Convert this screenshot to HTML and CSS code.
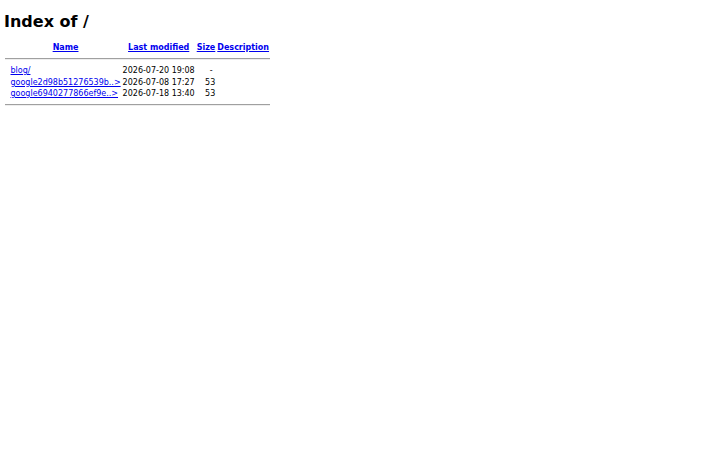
FILE: index.html
```
<!DOCTYPE html>
<html lang="en">
<head>
    <meta charset="UTF-8">
    <title>Index of /</title>
    <link rel="stylesheet" href="styles.css">
</head>
<body>
    <h1 class="title">Index of /</h1>
    <table class="listing">
        <tr>
            <th class="icon"></th>
            <th><a href="?C=N;O=D">Name</a></th>
            <th><a href="?C=M;O=A">Last modified</a></th>
            <th><a href="?C=S;O=A">Size</a></th>
            <th><a href="?C=D;O=A">Description</a></th>
        </tr>
        <tr><th colspan="5" class="rule"><hr></th></tr>
        <tr>
            <td class="icon"></td>
            <td><a href="blog/">blog/</a></td>
            <td class="num">2026-07-20 19:08</td>
            <td class="num">-&nbsp;</td>
            <td>&nbsp;</td>
        </tr>
        <tr>
            <td class="icon"></td>
            <td><a href="google2d98b51276539b.html">google2d98b51276539b..&gt;</a></td>
            <td class="num">2026-07-08 17:27</td>
            <td class="num">53</td>
            <td>&nbsp;</td>
        </tr>
        <tr>
            <td class="icon"></td>
            <td><a href="google6940277866ef9e.html">google6940277866ef9e..&gt;</a></td>
            <td class="num">2026-07-18 13:40</td>
            <td class="num">53</td>
            <td>&nbsp;</td>
        </tr>
        <tr><th colspan="5" class="rule"><hr></th></tr>
    </table>
</body>
</html>
```
FILE: styles.css
```
body {
    margin: 4px;
    font-family: "DejaVu Sans", sans-serif;
    font-size: 8px;
    color: #000;
    background: #fff;
}

a {
    color: #0000ee;
}

.title {
    font-size: 16px;
    margin: 7.5px 0 11px;
}

.listing {
    border-spacing: 1px;
}

.listing th,
.listing td {
    padding: 0.5px;
    line-height: 9.5px;
    white-space: nowrap;
}

.listing .icon {
    width: 3px;
}

.listing .num {
    text-align: right;
}

.listing .rule {
    padding: 0;
}

.listing hr {
    margin: 3.5px 0 5px;
    border: 0;
    border-top: 1px solid #a0a0a0;
    border-bottom: 1px solid #eee;
}
```
